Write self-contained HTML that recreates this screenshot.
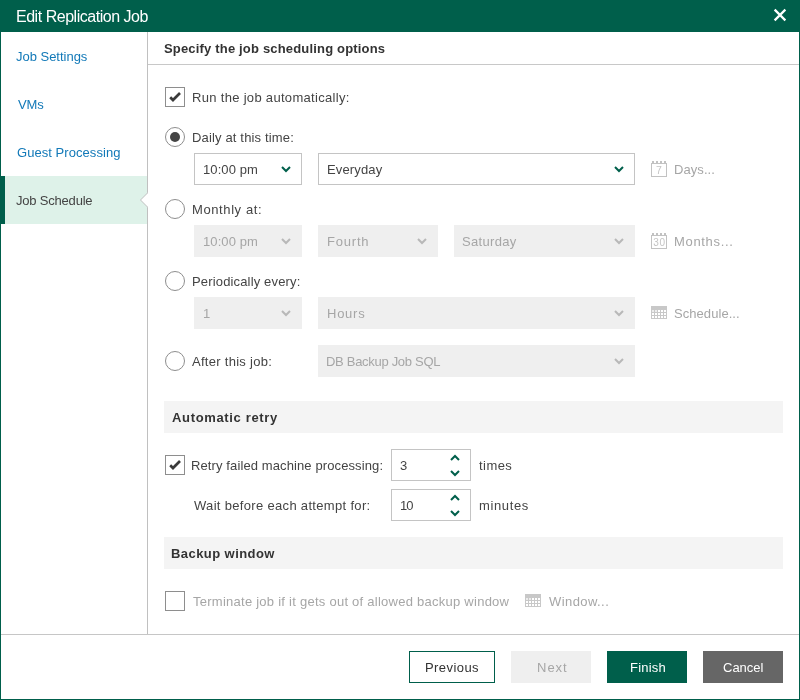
<!DOCTYPE html>
<html><head><meta charset="utf-8">
<style>
html,body{margin:0;padding:0;}
body{width:800px;height:700px;position:relative;overflow:hidden;background:#fff;font-family:"Liberation Sans",sans-serif;font-size:13px;color:#444;}
.abs{position:absolute;}
.t{position:absolute;white-space:nowrap;line-height:16px;height:16px;will-change:transform;}
#title{left:0;top:0;width:800px;height:32px;background:#005f4b;}
#frame{left:0;top:0;width:798px;height:698px;border:1px solid #005f4b;pointer-events:none;}
.sel{position:absolute;left:1px;top:176px;width:146px;height:48px;background:#def2e9;}
.box{position:absolute;box-sizing:border-box;border:1px solid #c4c4c4;background:#fff;}
.dis{position:absolute;background:#efefef;}
.cb{position:absolute;box-sizing:border-box;width:20px;height:20px;border:1px solid #8e8e8e;background:#fff;}
.rb{position:absolute;box-sizing:border-box;width:20px;height:20px;border:1px solid #8e8e8e;border-radius:50%;background:#fff;}
.sec{position:absolute;left:164px;width:619px;height:32px;background:#f4f4f4;}
.btn{position:absolute;box-sizing:border-box;height:32px;}
svg{position:absolute;overflow:visible;will-change:transform;}
</style></head><body>
<div id="title" class="abs"></div>
<svg style="left:774px;top:9px" width="12" height="12"><path d="M1.4 1.4 L10.6 10.6 M10.6 1.4 L1.4 10.6" stroke="#fff" stroke-width="2.2" stroke-linecap="square" fill="none"/></svg>

<!-- sidebar -->
<div class="abs" style="left:147px;top:32px;width:1px;height:602px;background:#c0c0c0;"></div>
<div class="sel"></div>
<div class="abs" style="left:1px;top:176px;width:4px;height:48px;background:#005f4b;"></div>
<svg style="left:139px;top:191px" width="10" height="18"><path d="M9 1.5 L8.5 2 L1.5 9 L8.5 16 L9 16.5 Z" fill="#fff"/><path d="M8.5 2 L1.5 9 L8.5 16" stroke="#c0c0c0" stroke-width="1" fill="none"/></svg>

<!-- header -->
<div class="abs" style="left:148px;top:64px;width:651px;height:1px;background:#c8c8c8;"></div>

<!-- run automatically -->
<div class="cb" style="left:165px;top:87px"></div>
<svg style="left:165px;top:87px" width="20" height="20"><path d="M5.2 10.2 L8 13 L15 6" stroke="#3a3a3a" stroke-width="2.7" fill="none"/></svg>

<!-- daily -->
<div class="rb" style="left:165px;top:127px"></div>
<div class="abs" style="left:170px;top:132px;width:10px;height:10px;border-radius:50%;background:#444;"></div>
<div class="box" style="left:194px;top:153px;width:108px;height:32px;"></div>
<svg style="left:281px;top:166px" width="10" height="7"><path d="M1 1 L5 5 L9 1" stroke="#005f4b" stroke-width="2" fill="none"/></svg>
<div class="box" style="left:318px;top:153px;width:317px;height:32px;"></div>
<svg style="left:614px;top:166px" width="10" height="7"><path d="M1 1 L5 5 L9 1" stroke="#005f4b" stroke-width="2" fill="none"/></svg>

<!-- monthly -->
<div class="rb" style="left:165px;top:199px"></div>
<div class="dis" style="left:194px;top:225px;width:108px;height:32px;"></div>
<div class="dis" style="left:318px;top:225px;width:120px;height:32px;"></div>
<div class="dis" style="left:454px;top:225px;width:181px;height:32px;"></div>

<!-- periodically -->
<div class="rb" style="left:165px;top:271px"></div>
<div class="dis" style="left:194px;top:297px;width:108px;height:32px;"></div>
<div class="dis" style="left:318px;top:297px;width:317px;height:32px;"></div>

<!-- after -->
<div class="rb" style="left:165px;top:351px"></div>
<div class="dis" style="left:318px;top:345px;width:317px;height:32px;"></div>

<!-- retry -->
<div class="sec" style="top:401px"></div>
<div class="cb" style="left:165px;top:455px"></div>
<svg style="left:165px;top:455px" width="20" height="20"><path d="M5.2 10.2 L8 13 L15 6" stroke="#3a3a3a" stroke-width="2.7" fill="none"/></svg>
<div class="box" style="left:391px;top:449px;width:80px;height:32px;"></div>
<div class="box" style="left:391px;top:489px;width:80px;height:32px;"></div>

<!-- backup window -->
<div class="sec" style="top:537px"></div>
<div class="cb" style="left:165px;top:591px"></div>

<!-- footer -->
<div class="abs" style="left:1px;top:634px;width:798px;height:1px;background:#c6c6c6;"></div>
<div class="btn" style="left:409px;top:651px;width:86px;border:1px solid #005f4b;"></div>
<div class="btn" style="left:511px;top:651px;width:80px;background:#efefef;"></div>
<div class="btn" style="left:607px;top:651px;width:80px;background:#005f4b;"></div>
<div class="btn" style="left:703px;top:651px;width:80px;background:#666;"></div>

<!-- icons -->
<svg style="left:651px;top:161px" width="16" height="16"><rect x="1" y="0" width="2" height="2" fill="#c2c2c2"/><rect x="5" y="0" width="2" height="2" fill="#c2c2c2"/><rect x="9" y="0" width="2" height="2" fill="#c2c2c2"/><rect x="13" y="0" width="2" height="2" fill="#c2c2c2"/><rect x="0.5" y="2.5" width="15" height="13" fill="#fff" stroke="#c2c2c2" stroke-width="1"/><text x="8" y="13" font-family="Liberation Sans, sans-serif" font-size="10.5" fill="#c4c4c4" text-anchor="middle">7</text></svg>
<svg style="left:651px;top:233px" width="16" height="16"><rect x="1" y="0" width="2" height="2" fill="#c2c2c2"/><rect x="5" y="0" width="2" height="2" fill="#c2c2c2"/><rect x="9" y="0" width="2" height="2" fill="#c2c2c2"/><rect x="13" y="0" width="2" height="2" fill="#c2c2c2"/><rect x="0.5" y="2.5" width="15" height="13" fill="#fff" stroke="#c2c2c2" stroke-width="1"/><text x="8.4" y="13" font-family="Liberation Sans, sans-serif" font-size="10" letter-spacing="0.7" fill="#c4c4c4" text-anchor="middle">30</text></svg>
<svg style="left:651px;top:306px" width="16" height="13"><rect x="0" y="0" width="16" height="13" fill="#c8c8c8"/><rect x="1" y="4" width="2" height="2" fill="#ececec"/><rect x="4" y="4" width="2" height="2" fill="#ececec"/><rect x="7" y="4" width="2" height="2" fill="#fff"/><rect x="10" y="4" width="2" height="2" fill="#fff"/><rect x="13" y="4" width="2" height="2" fill="#fff"/><rect x="1" y="7" width="2" height="2" fill="#fff"/><rect x="4" y="7" width="2" height="2" fill="#fff"/><rect x="7" y="7" width="2" height="2" fill="#fff"/><rect x="10" y="7" width="2" height="2" fill="#fff"/><rect x="13" y="7" width="2" height="2" fill="#fff"/><rect x="1" y="10" width="2" height="2" fill="#fff"/><rect x="4" y="10" width="2" height="2" fill="#fff"/><rect x="7" y="10" width="2" height="2" fill="#fff"/><rect x="10" y="10" width="2" height="2" fill="#fff"/><rect x="13" y="10" width="2" height="2" fill="#fff"/></svg>
<svg style="left:525px;top:594px" width="16" height="13"><rect x="0" y="0" width="16" height="13" fill="#c8c8c8"/><rect x="1" y="4" width="2" height="2" fill="#ececec"/><rect x="4" y="4" width="2" height="2" fill="#ececec"/><rect x="7" y="4" width="2" height="2" fill="#fff"/><rect x="10" y="4" width="2" height="2" fill="#fff"/><rect x="13" y="4" width="2" height="2" fill="#fff"/><rect x="1" y="7" width="2" height="2" fill="#fff"/><rect x="4" y="7" width="2" height="2" fill="#fff"/><rect x="7" y="7" width="2" height="2" fill="#fff"/><rect x="10" y="7" width="2" height="2" fill="#fff"/><rect x="13" y="7" width="2" height="2" fill="#fff"/><rect x="1" y="10" width="2" height="2" fill="#fff"/><rect x="4" y="10" width="2" height="2" fill="#fff"/><rect x="7" y="10" width="2" height="2" fill="#fff"/><rect x="10" y="10" width="2" height="2" fill="#fff"/><rect x="13" y="10" width="2" height="2" fill="#fff"/></svg>
<svg style="left:281px;top:238px" width="10" height="6"><path d="M1 1 L5 5 L9 1" stroke="#b8b8b8" stroke-width="2" fill="none"/></svg>
<svg style="left:417px;top:238px" width="10" height="6"><path d="M1 1 L5 5 L9 1" stroke="#b8b8b8" stroke-width="2" fill="none"/></svg>
<svg style="left:614px;top:238px" width="10" height="6"><path d="M1 1 L5 5 L9 1" stroke="#b8b8b8" stroke-width="2" fill="none"/></svg>
<svg style="left:281px;top:310px" width="10" height="6"><path d="M1 1 L5 5 L9 1" stroke="#b8b8b8" stroke-width="2" fill="none"/></svg>
<svg style="left:614px;top:310px" width="10" height="6"><path d="M1 1 L5 5 L9 1" stroke="#b8b8b8" stroke-width="2" fill="none"/></svg>
<svg style="left:614px;top:358px" width="10" height="6"><path d="M1 1 L5 5 L9 1" stroke="#b8b8b8" stroke-width="2" fill="none"/></svg>
<svg style="left:450px;top:455px" width="10" height="6"><path d="M1 5 L5 1 L9 5" stroke="#005f4b" stroke-width="2" fill="none"/></svg>
<svg style="left:450px;top:470px" width="10" height="6"><path d="M1 1 L5 5 L9 1" stroke="#005f4b" stroke-width="2" fill="none"/></svg>
<svg style="left:450px;top:495px" width="10" height="6"><path d="M1 5 L5 1 L9 5" stroke="#005f4b" stroke-width="2" fill="none"/></svg>
<svg style="left:450px;top:510px" width="10" height="6"><path d="M1 1 L5 5 L9 1" stroke="#005f4b" stroke-width="2" fill="none"/></svg>

<div class="t" style="left:16px;top:7px;line-height:20px;height:20px;letter-spacing:-0.474px;font-size:16px;color:#fff;">Edit Replication Job</div>
<div class="t" style="left:16px;top:49px;line-height:16px;height:16px;letter-spacing:-0.018px;color:#1279b8;">Job Settings</div>
<div class="t" style="left:18px;top:97px;line-height:16px;height:16px;letter-spacing:-0.1px;color:#1279b8;">VMs</div>
<div class="t" style="left:17px;top:145px;line-height:16px;height:16px;letter-spacing:0.053px;color:#1279b8;">Guest Processing</div>
<div class="t" style="left:16px;top:193px;line-height:16px;height:16px;letter-spacing:-0.2px;">Job Schedule</div>
<div class="t" style="left:164px;top:41px;line-height:16px;height:16px;letter-spacing:0.176px;font-weight:bold;color:#333;">Specify the job scheduling options</div>
<div class="t" style="left:192px;top:90px;line-height:16px;height:16px;letter-spacing:0.312px;">Run the job automatically:</div>
<div class="t" style="left:192px;top:130px;line-height:16px;height:16px;letter-spacing:0.156px;">Daily at this time:</div>
<div class="t" style="left:203px;top:162px;line-height:16px;height:16px;letter-spacing:0.086px;">10:00 pm</div>
<div class="t" style="left:327px;top:162px;line-height:16px;height:16px;letter-spacing:0.143px;">Everyday</div>
<div class="t" style="left:674px;top:162px;line-height:16px;height:16px;letter-spacing:0.067px;color:#a6a6a6;">Days...</div>
<div class="t" style="left:192px;top:202px;line-height:16px;height:16px;letter-spacing:0.6px;">Monthly at:</div>
<div class="t" style="left:203px;top:234px;line-height:16px;height:16px;letter-spacing:0.086px;color:#a6a6a6;">10:00 pm</div>
<div class="t" style="left:327px;top:234px;line-height:16px;height:16px;letter-spacing:0.8px;color:#a6a6a6;">Fourth</div>
<div class="t" style="left:462px;top:234px;line-height:16px;height:16px;letter-spacing:0.314px;color:#a6a6a6;">Saturday</div>
<div class="t" style="left:674px;top:234px;line-height:16px;height:16px;letter-spacing:0.675px;color:#a6a6a6;">Months...</div>
<div class="t" style="left:192px;top:274px;line-height:16px;height:16px;letter-spacing:0.156px;">Periodically every:</div>
<div class="t" style="left:203px;top:306px;line-height:16px;height:16px;letter-spacing:0px;color:#a6a6a6;">1</div>
<div class="t" style="left:327px;top:306px;line-height:16px;height:16px;letter-spacing:0.75px;color:#a6a6a6;">Hours</div>
<div class="t" style="left:674px;top:306px;line-height:16px;height:16px;letter-spacing:0.06px;color:#a6a6a6;">Schedule...</div>
<div class="t" style="left:192px;top:354px;line-height:16px;height:16px;letter-spacing:0.286px;">After this job:</div>
<div class="t" style="left:326px;top:354px;line-height:16px;height:16px;letter-spacing:-0.3px;color:#a6a6a6;">DB Backup Job SQL</div>
<div class="t" style="left:172px;top:410px;line-height:16px;height:16px;letter-spacing:0.657px;font-weight:bold;color:#333;">Automatic retry</div>
<div class="t" style="left:191px;top:458px;line-height:16px;height:16px;letter-spacing:0.11px;">Retry failed machine processing:</div>
<div class="t" style="left:400px;top:458px;line-height:16px;height:16px;letter-spacing:0px;">3</div>
<div class="t" style="left:479px;top:458px;line-height:16px;height:16px;letter-spacing:0.45px;">times</div>
<div class="t" style="left:194px;top:498px;line-height:16px;height:16px;letter-spacing:0.321px;">Wait before each attempt for:</div>
<div class="t" style="left:400px;top:498px;line-height:16px;height:16px;letter-spacing:-1.0px;">10</div>
<div class="t" style="left:479px;top:498px;line-height:16px;height:16px;letter-spacing:0.633px;">minutes</div>
<div class="t" style="left:171px;top:546px;line-height:16px;height:16px;letter-spacing:0.433px;font-weight:bold;color:#333;">Backup window</div>
<div class="t" style="left:193px;top:594px;line-height:16px;height:16px;letter-spacing:0.254px;color:#a6a6a6;">Terminate job if it gets out of allowed backup window</div>
<div class="t" style="left:549px;top:594px;line-height:16px;height:16px;letter-spacing:0.425px;color:#a6a6a6;">Window...</div>
<div class="t" style="left:425px;top:660px;line-height:16px;height:16px;letter-spacing:0.429px;color:#333;">Previous</div>
<div class="t" style="left:537px;top:660px;line-height:16px;height:16px;letter-spacing:1.0px;color:#a6a6a6;">Next</div>
<div class="t" style="left:630px;top:660px;line-height:16px;height:16px;letter-spacing:0.2px;color:#fff;">Finish</div>
<div class="t" style="left:723px;top:660px;line-height:16px;height:16px;letter-spacing:0.0px;color:#fff;">Cancel</div>

<div id="frame" class="abs"></div>
</body></html>
